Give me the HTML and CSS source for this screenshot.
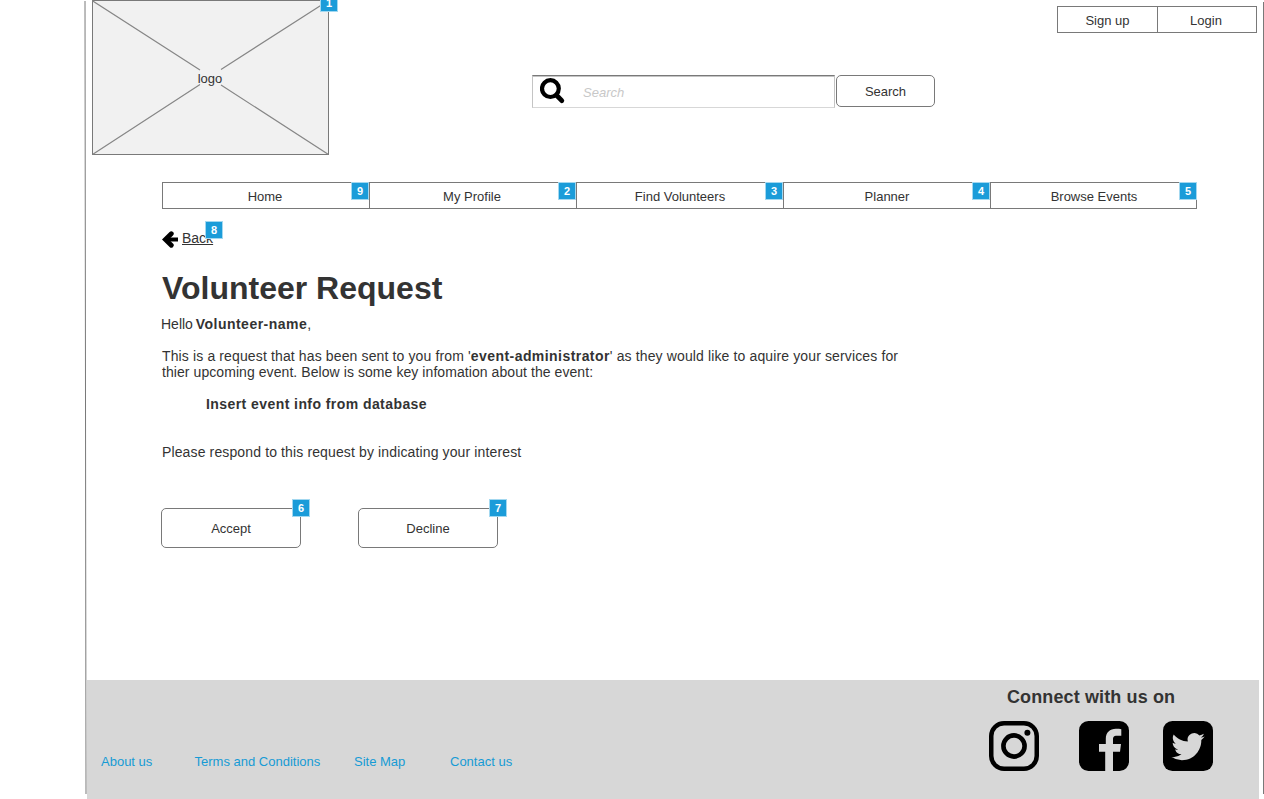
FILE: index.html
```html
<!DOCTYPE html>
<html lang="en">
<head>
<meta charset="utf-8">
<title>Volunteer Request</title>
<link rel="stylesheet" href="styles.css">
</head>
<body>
<div class="page">
  <svg class="frame" width="1264" height="799" viewBox="0 0 1264 799" fill="none" stroke="#797979">
    <path d="M85 1 86 794M1263.5 2V794"/>
  </svg>
  <header class="header">
    <div class="logo">
      <svg class="logo-cross" width="237" height="155" viewBox="0 0 237 155" fill="none" stroke="#868686">
        <path d="M0 .5 108 70M129 85 236.500 154.500M.5 154.500 108 84.500M129 69.500 236.500 .5" stroke-width="1.200"/>
      </svg>
      <span class="logo-text">logo</span>
      <span class="note note-logo">1</span>
    </div>
    <form class="search">
      <label class="search-box">
        <svg width="26" height="27" viewBox="0 0 26 27" fill="none" stroke="#000">
          <circle cx="10.400" cy="10.600" r="8.400" stroke-width="4.200"/>
          <path d="m16.800 17.500 5 5.200" stroke-width="4.800" stroke-linecap="round"/>
        </svg>
        <span class="placeholder">Search</span>
      </label>
      <button class="button search-button" type="button">Search</button>
    </form>
    <div class="auth"><a class="auth-link">Sign up</a><a class="auth-link">Login</a></div>
  </header>
  <nav class="nav">
    <a class="tab tab-wide">Home<span class="note">9</span></a>
    <a class="tab tab-wide">My Profile<span class="note">2</span></a>
    <a class="tab">Find Volunteers<span class="note">3</span></a>
    <a class="tab">Planner<span class="note">4</span></a>
    <a class="tab">Browse Events<span class="note">5</span></a>
  </nav>
  <main class="main">
    <a class="back">
      <svg width="17" height="18" viewBox="0 0 17 18" fill="none" stroke="#000" stroke-width="4">
        <path d="M16 9.500H4"/><path d="M9.300 3.700 3.400 9.500l5.900 5.800" stroke-width="4.800" stroke-linecap="round"/>
      </svg>
      <span class="back-text">Back</span>
      <span class="note note-back">8</span>
    </a>
    <h1 class="title">Volunteer Request</h1>
    <p class="hello">Hello <b>Volunteer-name</b>,</p>
    <p class="copy">This is a request that has been sent to you from '<b>event-administrator</b>' as they would like to aquire your services for<br><span class="copy-second">thier upcoming event. Below is some key infomation about the event:</span></p>
    <p class="insert"><b>Insert event info from database</b></p>
    <p class="respond">Please respond to this request by indicating your interest</p>
    <div class="actions">
      <button class="button action" type="button">Accept<span class="note note-action">6</span></button>
      <button class="button action" type="button">Decline<span class="note note-action">7</span></button>
    </div>
  </main>
  <footer class="footer">
    <div class="links">
      <a class="about">About us</a><a class="terms">Terms and Conditions</a><a class="map">Site Map</a><a class="contact">Contact us</a>
    </div>
    <div class="connect">
      <h2 class="connect-title">Connect with us on</h2>
      <div class="socials">
        <svg width="50" height="50" viewBox="0 0 50 50" fill="none" stroke="#000">
          <rect x="2.250" y="2.250" width="45.500" height="45.500" rx="12.800" stroke-width="4.500"/>
          <circle cx="25" cy="25" r="10.600" stroke-width="4.600"/>
          <circle cx="38.400" cy="11.700" r="3" fill="#000" stroke="none"/>
        </svg>
        <svg width="50" height="50" viewBox="0 0 50 50">
          <path d="M9.400 0h31.200A9.400 9.400 0 0 1 50 9.400v31.200A9.400 9.400 0 0 1 40.600 50H34V30.800h7l1-7.700h-8v-4.600c0-2.300.7-3.700 3.900-3.700h4.400V8.200C41.500 8 39.300 7.800 36.900 7.800c-6 0-10.100 3.600-10.100 10.200v5.100H20v7.700h6.200V50H9.400A9.400 9.400 0 0 1 0 40.600V9.400A9.400 9.400 0 0 1 9.400 0z"/>
        </svg>
        <svg width="50" height="50" viewBox="0 0 50 50">
          <rect width="50" height="50" rx="9.400"/>
          <path fill="#d7d7d7" d="M41.700 15.400c-1.200.5-2.500.9-3.900 1.100 1.400-.8 2.500-2.200 3-3.800-1.300.8-2.800 1.400-4.300 1.700a6.800 6.800 0 0 0-11.700 6.200c-5.700-.3-10.700-3-14.100-7.100-1.700 2.900-.9 7 2.100 9.100-1.100 0-2.200-.3-3.100-.9v.1c0 3.300 2.400 6.100 5.500 6.700-1 .3-2.100.3-3.100.1a6.800 6.800 0 0 0 6.400 4.700 13.700 13.700 0 0 1-10.100 2.800 19.400 19.400 0 0 0 10.500 3.100c12.600 0 19.400-10.400 19.400-19.400v-.9c1.300-1 2.500-2.200 3.400-3.500z"/>
        </svg>
      </div>
    </div>
  </footer>
</div>
</body>
</html>
```
FILE: styles.css
```css
* { box-sizing: border-box; }
body { margin: 0; background: #fff; }
h1, h2, p { margin: 0; }
svg { display: block; flex: none; }
.page {
  position: relative;
  width: 1264px;
  height: 799px;
  overflow: hidden;
  display: flex;
  flex-direction: column;
  font: 13px/15px "Liberation Sans", Arial, sans-serif;
  color: #333;
}
.frame { position: absolute; inset: 0; pointer-events: none; }
.header { height: 155px; margin-bottom: 27px; padding: 0 7px 0 92px; display: flex; }
.logo {
  position: relative;
  width: 237px;
  height: 155px;
  border: 1px solid #797979;
  background: #f1f1f1;
  display: flex;
  align-items: center;
  justify-content: center;
}
.logo-cross { position: absolute; top: -1px; left: -1px; }
.logo-text { position: relative; padding-top: 2px; margin-right: 1px; }
.note {
  position: absolute;
  top: -1px;
  right: 0;
  width: 18px;
  height: 18px;
  border: 1px solid #a3d8f0;
  background: #1b9cd9;
  color: #fff;
  font: bold 11px/16px "Liberation Sans", Arial, sans-serif;
  letter-spacing: 0;
  text-align: center;
}
.note-logo { top: -7px; right: -10px; }
.search { margin: 75px 0 0 203px; display: flex; gap: 1px; align-items: flex-start; }
.search-box {
  width: 303px;
  height: 33px;
  border: 1px solid #c4c4c4;
  border-top: 1px solid #797979;
  border-bottom-color: #d7d7d7;
  box-shadow: inset 0 1px #c4c4c4;
  padding: 2px 0 0 7px;
  display: flex;
}
.placeholder { margin: 7px 0 0 17px; font-style: italic; color: #c8c8c8; }
.button {
  position: relative;
  border: 1px solid #797979;
  border-radius: 5px;
  background: #fff;
  padding: 0;
  font: inherit;
  color: #333;
}
.search-button { width: 99px; height: 32px; }
.auth { margin: 6px 0 0 auto; display: grid; grid-template-columns: 99px 99px; width: 200px; height: 27px; border: 1px solid #797979; }
.auth-link { height: 25px; text-align: center; line-height: 27px; }
.auth-link + .auth-link { border-left: 1px solid #797979; padding-right: 2px; }
.nav { margin-left: 162px; width: 1035px; height: 27px; border: 1px solid #797979; border-left: 0; display: grid; grid-template-columns: repeat(5, 207px); }
.tab { position: relative; height: 25px; border-left: 1px solid #797979; line-height: 27px; text-align: center; }
.tab-wide { padding-right: 2px; }
.main { padding-left: 162px; height: 471px; font-size: 14px; line-height: 16px; }
.back { position: relative; margin-top: 21px; height: 18px; width: 61px; display: flex; gap: 3px; }
.back-text { text-decoration: underline; }
.note-back { top: -9px; right: 0; }
.title { margin-top: 22px; font-size: 32px; line-height: 37px; }
.hello { margin: 9px 0 16px -1px; word-spacing: -1px; }
.hello b { letter-spacing: .47px; }
.copy { letter-spacing: .13px; }
.copy b { letter-spacing: .44px; }
.copy-second { letter-spacing: .07px; }
.insert { margin: 16px 0 32px 44px; letter-spacing: .43px; }
.respond { letter-spacing: .13px; }
.actions { margin: 48px 0 0 -1px; display: flex; gap: 57px; font-size: 13px; line-height: 15px; }
.action { width: 140px; height: 40px; }
.note-action { top: -10px; right: -10px; }
.footer { margin-left: 87px; width: 1172px; height: 119px; background: #d7d7d7; display: flex; justify-content: space-between; }
.links { padding: 74px 0 0 14px; display: flex; color: #169bd5; }
.about { width: 93.500px; }
.terms { width: 159.500px; }
.map { width: 96px; }
.connect { width: 270px; padding-top: 7px; }
.connect-title { margin-left: 18px; font-size: 18px; line-height: 21px; letter-spacing: .12px; }
.socials { margin-top: 13px; display: flex; }
.socials svg:nth-child(2) { margin: 0 34px 0 40px; }
```
